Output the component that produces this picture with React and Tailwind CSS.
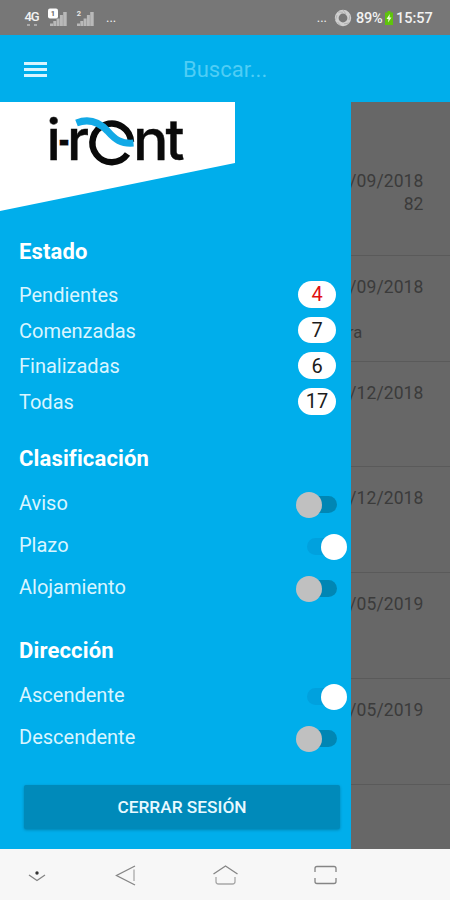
import React from 'react';

const estados = [
  { label: 'Pendientes', count: 4, alert: true },
  { label: 'Comenzadas', count: 7 },
  { label: 'Finalizadas', count: 6 },
  { label: 'Todas', count: 17 },
];

const clasificacion = [
  { label: 'Aviso', on: false },
  { label: 'Plazo', on: true },
  { label: 'Alojamiento', on: false },
];

const direccion = [
  { label: 'Ascendente', on: true },
  { label: 'Descendente', on: false },
];

const reservas = [
  { date: '/09/2018', number: '82' },
  { date: '/09/2018', note: 'ra' },
  { date: '/12/2018' },
  { date: '/12/2018' },
  { date: '/05/2019' },
  { date: '/05/2019' },
];

function Signal({ sim, boxed }) {
  return (
    <svg width="20" height="20" viewBox="0 0 20 20">
      <g fill="#b9b9b9">
        <rect x="2" y="15.5" width="3" height="2.5" />
        <rect x="5.3" y="13" width="3" height="5" />
        <rect x="8.6" y="10.5" width="3" height="7.5" />
        <rect x="11.9" y="7" width="3" height="11" />
        <rect x="15.2" y="4" width="3.5" height="14" />
      </g>
      {boxed && <rect x="0" y="0.5" width="10" height="10" rx="2" fill="#fff" />}
      <text
        x={boxed ? 5 : 4}
        y="8.3"
        textAnchor="middle"
        fontSize="7.5"
        fontWeight="700"
        fontFamily="Roboto"
        fill={boxed ? '#666' : '#e8e8e8'}
      >
        {sim}
      </text>
    </svg>
  );
}

function StatusBar() {
  return (
    <div className="flex h-[35px] shrink-0 items-center bg-[#777777] pl-6 pr-[17px] text-[#f2f2f2]">
      <div className="flex w-[15px] flex-col items-center leading-none">
        <span className="mt-0.5 text-[13px] font-medium leading-[12px] tracking-[-1px]">4G</span>
        <span className="mt-px flex gap-1">
          <i className="h-[2px] w-[3px] bg-[#aaa]" />
          <i className="h-[2px] w-[3px] bg-[#aaa]" />
        </span>
      </div>
      <div className="ml-[9px]">
        <Signal sim="1" boxed />
      </div>
      <div className="ml-[7px]">
        <Signal sim="2" />
      </div>
      <span className="ml-[11px] text-[13px] leading-none">...</span>
      <div className="ml-auto flex items-center">
        <span className="mr-[7px] text-[13px] leading-none">...</span>
        <svg width="18" height="18" viewBox="0 0 18 18" fill="none">
          <circle cx="9" cy="9" r="6.3" stroke="#cfcfcf" strokeWidth="3.8" />
          <g stroke="#a5a5a5" strokeWidth="0.7">
            <path d="M9 1l3 4M16 6l-1 5M15 14l-5 .8M7 17l-3.4-4M1.5 11L3 6M4 3l5 .3" />
          </g>
        </svg>
        <span className="ml-[4px] mt-[2px] w-[29px] whitespace-nowrap text-[14.5px] font-medium leading-[16px] tracking-[-0.2px]">89%</span>
        <svg className="mt-px" width="8" height="14" viewBox="0 0 8 14">
          <path d="M2.5 0h3v1.4H8V14H0V1.4h2.5z" fill="#5fc40c" />
          <path d="M4.8 3L1.5 8h2L3 11.5 6.5 6.6h-2z" fill="#eaffd8" />
        </svg>
        <span className="ml-[3px] mt-[2px] w-[37px] whitespace-nowrap text-[14.5px] font-medium leading-[16px]">15:57</span>
      </div>
    </div>
  );
}

function Logo() {
  return (
    <svg className="block" width="235" height="109" viewBox="0 0 235 109">
      <path d="M0 0H235V61L0 109Z" fill="#fff" />
      <g fontFamily="Inter" fontWeight="500" fontSize="57" fill="#0a0a0a" stroke="#0a0a0a" strokeWidth="0.4">
        <text x="46.5" y="57.5">i</text>
        <text x="58" y="58" textLength="12" lengthAdjust="spacingAndGlyphs">-</text>
        <text x="67" y="57.5" textLength="22" lengthAdjust="spacingAndGlyphs">r</text>
        <text x="133" y="57.5" textLength="35.5" lengthAdjust="spacingAndGlyphs">n</text>
        <text x="165.5" y="57.5" textLength="19" lengthAdjust="spacingAndGlyphs">t</text>
      </g>
      {/* ring and ribbon of the brand mark */}
      <path d="M131 40A19.3 19.3 0 1 0 127.5 52" fill="none" stroke="#0a0a0a" strokeWidth="6.4" />
      <path
        d="M76.5 21C88 16.500 98 19 107.500 29C115 37.500 121 42 133.500 41"
        fill="none"
        stroke="#12a9e6"
        strokeWidth="7"
      />
    </svg>
  );
}

function Switch({ on }) {
  return (
    <div className="relative mr-[14.5px] mt-[4px] h-[17px] w-[30px]">
      <div className={`h-full w-full rounded-full ${on ? 'bg-[#00a1de]' : 'bg-[#0086b4]'}`} />
      <div
        className={`absolute -top-[4.5px] size-[26px] rounded-full ${
          on ? 'left-[14px] bg-white' : '-left-[11px] bg-[#c0c0c0]'
        }`}
      />
    </div>
  );
}

function SwitchRow({ label, on }) {
  return (
    <div className="flex h-[42px] items-center justify-between">
      <span>{label}</span>
      <Switch on={on} />
    </div>
  );
}

function Heading({ children }) {
  return (
    <h2 className="flex h-[40px] items-center pt-px text-[22px] font-bold tracking-[0.15px] text-white">{children}</h2>
  );
}

function Drawer() {
  return (
    <aside className="relative z-10 h-full w-[351px] shrink-0 bg-[#00aeeb]">
      <Logo />
      <div className="pl-[19px] pt-5 text-[20px] leading-[24px] text-[#d9f5ff]">
        <Heading>Estado</Heading>
        <div className="mt-[5.5px]">
          {estados.map((item) => (
            <div key={item.label} className="flex h-[35.7px] items-center justify-between pr-[15px]">
              <span className="pt-px">{item.label}</span>
              <span
                className={`flex h-[26.5px] w-[38px] items-center justify-center rounded-full bg-white ${
                  item.alert ? 'text-[#e01010]' : 'text-[#1c1c1c]'
                }`}
              >
                {item.count}
              </span>
            </div>
          ))}
        </div>
        <div className="mt-[19px]">
          <Heading>Clasificación</Heading>
        </div>
        <div className="mt-[3.5px]">
          {clasificacion.map((item) => (
            <SwitchRow key={item.label} {...item} />
          ))}
        </div>
        <div className="mt-[23px]">
          <Heading>Dirección</Heading>
        </div>
        <div className="mt-[3px]">
          {direccion.map((item) => (
            <SwitchRow key={item.label} {...item} />
          ))}
        </div>
        <button className="ml-[5px] mt-[27px] flex h-[44px] w-[316px] items-center justify-center rounded-[2px] bg-[#008aba] text-[17.3px] font-medium text-[#e8f9ff] shadow-[0_1px_3px_rgba(0,0,0,0.25)]">
          CERRAR SESIÓN
        </button>
      </div>
    </aside>
  );
}

function ReservaList() {
  return (
    <div className="-ml-2 flex-1 bg-[#676767] pt-[48px] text-[17.5px] leading-[20px] tracking-[0.1px] text-[#3b3b3b]">
      {reservas.map((item, i) => (
        <div key={i} className="h-[105.75px] border-b border-[#5a5a5a] pr-[26.5px] pt-[21px] text-right">
          <div className="whitespace-nowrap">{item.date}</div>
          {item.number && <div className="mt-[2.5px]">{item.number}</div>}
          {item.note && <div className="ml-[5px] mt-[26px] text-left text-[16.5px]">{item.note}</div>}
        </div>
      ))}
    </div>
  );
}

function NavBar() {
  return (
    <div className="flex h-[51px] shrink-0 bg-[#f7f7f7]">
      <svg width="450" height="51" viewBox="0 0 450 51" fill="none" stroke="#858585" strokeWidth="1.3">
        <path d="M29 26l8 5.5 8-5.5" />
        <circle cx="37" cy="24" r="1.7" fill="#333" stroke="none" />
        <path d="M135 17l-18.5 9.5 18.5 9.5" />
        <path d="M134 20.500v11.500" stroke="#c4c4c4" strokeWidth="2" />
        <path d="M213.500 25l12-8 12 8" />
        <path d="M216 28v4.500q0 2.500 2.500 2.500h14q2.500 0 2.500-2.500v-4.500" stroke="#a8a8a8" />
        <path d="M315 23v-3.500q0-2 2-2h17q2 0 2 2V23M315 29v3.500q0 2 2 2h17q2 0 2-2V29" />
      </svg>
    </div>
  );
}

export default function App() {
  return (
    <div className="flex h-[900px] w-[450px] flex-col overflow-hidden font-['Roboto',sans-serif]">
      <StatusBar />
      <header className="flex h-[67px] shrink-0 items-center bg-[#00aeeb]">
        <div className="ml-6 mt-px flex w-[23px] flex-col gap-[3px]">
          <i className="h-[3px] bg-[#d8f4fe]" />
          <i className="h-[3px] bg-[#d8f4fe]" />
          <i className="h-[3px] bg-[#d8f4fe]" />
        </div>
        <span className="ml-[136px] mt-[2px] text-[22px] leading-[26px] text-[#4fcdf5]">Buscar...</span>
      </header>
      <main className="flex h-[747px] shrink-0">
        <Drawer />
        <ReservaList />
      </main>
      <NavBar />
    </div>
  );
}
